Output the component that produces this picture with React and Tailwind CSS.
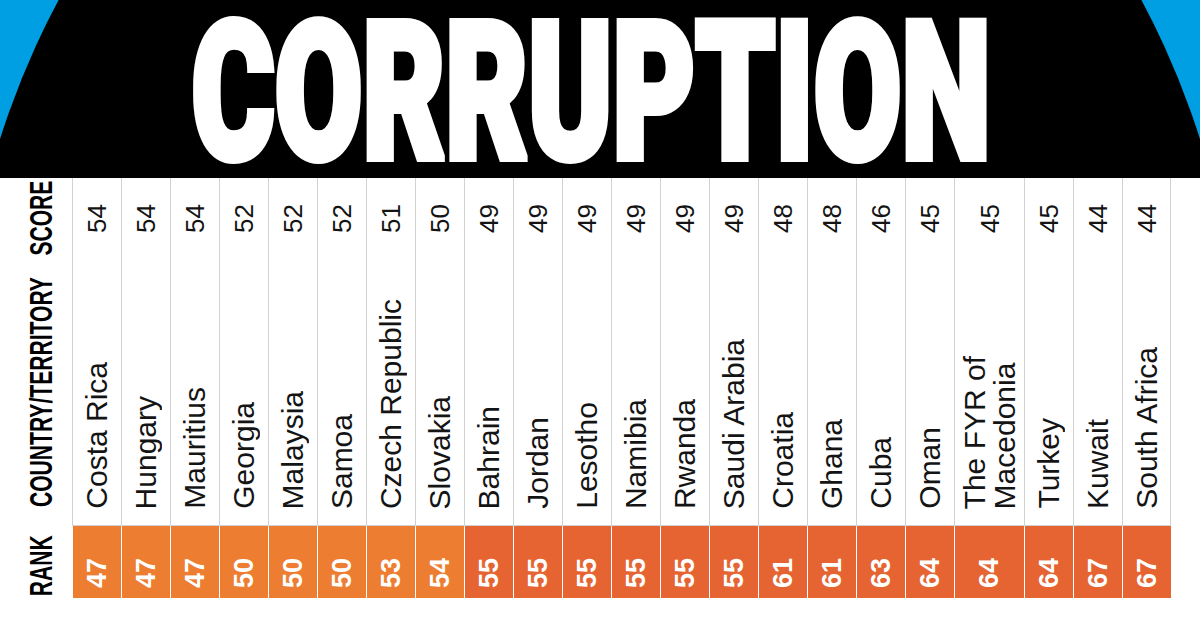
import React from "react";

const rows = [
  { rank: 47, country: "Costa Rica", score: 54 },
  { rank: 47, country: "Hungary", score: 54 },
  { rank: 47, country: "Mauritius", score: 54 },
  { rank: 50, country: "Georgia", score: 52 },
  { rank: 50, country: "Malaysia", score: 52 },
  { rank: 50, country: "Samoa", score: 52 },
  { rank: 53, country: "Czech Republic", score: 51 },
  { rank: 54, country: "Slovakia", score: 50 },
  { rank: 55, country: "Bahrain", score: 49 },
  { rank: 55, country: "Jordan", score: 49 },
  { rank: 55, country: "Lesotho", score: 49 },
  { rank: 55, country: "Namibia", score: 49 },
  { rank: 55, country: "Rwanda", score: 49 },
  { rank: 55, country: "Saudi Arabia", score: 49 },
  { rank: 61, country: "Croatia", score: 48 },
  { rank: 61, country: "Ghana", score: 48 },
  { rank: 63, country: "Cuba", score: 46 },
  { rank: 64, country: "Oman", score: 45 },
  { rank: 64, country: ["The FYR of", "Macedonia"], score: 45, wide: true },
  { rank: 64, country: "Turkey", score: 45 },
  { rank: 67, country: "Kuwait", score: 44 },
  { rank: 67, country: "South Africa", score: 44 },
];

// text reading bottom to top
const vert = "[writing-mode:vertical-rl] rotate-180 whitespace-nowrap";
const label =
  vert + " font-bold text-[31px] leading-none text-black scale-y-[0.68]";

const Banner = () => (
  <div className="relative h-[178px] bg-[#009ee2]">
    <svg
      className="absolute inset-0"
      width="1200"
      height="178"
      viewBox="0 0 1200 178"
    >
      <ellipse cx="600" cy="400" rx="640" ry="750" fill="#000" />
    </svg>
    <div className="relative flex h-full items-center justify-center pr-[18px] pt-[6px]">
      <div className="whitespace-nowrap font-['Roboto','Liberation_Sans',sans-serif] text-[127px] font-black leading-[107px] text-white scale-y-[1.5] [-webkit-text-stroke:5.4px_white]">
        CORRUPTION
      </div>
    </div>
  </div>
);

const Column = ({ row, last }) => {
  const light = row.rank < 55;
  return (
    <div className={`flex flex-col ${row.wide ? "w-[70px]" : "w-[49px]"}`}>
      <div
        className={`flex h-[348px] flex-col border-b border-l border-[#d2d2d2] ${
          last ? "border-r" : ""
        }`}
      >
        <div className="flex h-[80px] items-center justify-center">
          <span className={vert + " text-[26px] leading-none text-[#141414]"}>
            {row.score}
          </span>
        </div>
        <div className="flex flex-1 items-end justify-center pb-[16px]">
          <span className={vert + " text-[30px] leading-[30px] text-[#141414]"}>
            {Array.isArray(row.country) ? (
              <>
                {row.country[0]}
                <br />
                {row.country[1]}
              </>
            ) : (
              row.country
            )}
          </span>
        </div>
      </div>
      <div
        className={`flex h-[72px] items-end justify-center border-l border-white pb-[10px] ${
          light ? "bg-[#ed7d31]" : "bg-[#e56432]"
        }`}
      >
        <span className={vert + " text-[27px] font-bold leading-none text-white"}>
          {row.rank}
        </span>
      </div>
    </div>
  );
};

export default function App() {
  return (
    <div className="h-[617px] w-[1200px] overflow-hidden bg-white font-['Liberation_Sans',Arial,sans-serif]">
      <Banner />
      <div className="flex">
        <div className="flex w-[72px] flex-col pl-[10px]">
          <div className="flex h-[80px] items-center justify-center">
            <span className={label}>SCORE</span>
          </div>
          <div className="flex h-[268px] items-center justify-center">
            <span className={label}>COUNTRY/TERRITORY</span>
          </div>
          <div className="flex h-[72px] items-center justify-center pt-2">
            <span className={label}>RANK</span>
          </div>
        </div>
        {rows.map((r, i) => (
          <Column key={i} row={r} last={i === rows.length - 1} />
        ))}
      </div>
    </div>
  );
}
